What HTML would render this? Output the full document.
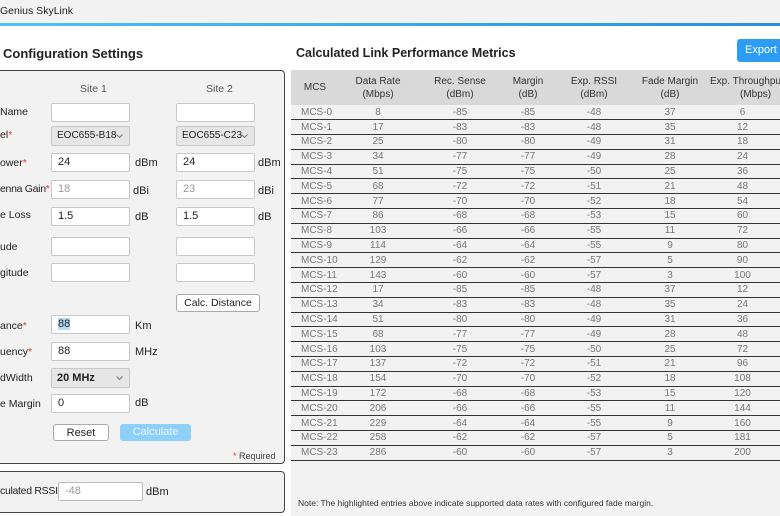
<!DOCTYPE html>
<html><head><meta charset="utf-8"><style>
*{box-sizing:border-box;margin:0;padding:0}
body{width:780px;height:516px;overflow:hidden;background:#fff;font-family:"Liberation Sans",sans-serif;font-size:11px;color:#222;position:relative}
.a{position:absolute}
.inp{position:absolute;height:19px;border:1px solid #c8c8c8;border-radius:2px;background:#fff;padding:2px 6px;font-size:11px;line-height:13px}
.sel{position:absolute;height:20px;border:1px solid #c8c8c8;border-radius:2px;background:#e6e6e6;padding:3px 5px;font-size:11px}
.sel svg{position:absolute;right:6px;top:7px}
.lbl{position:absolute;font-size:10.5px;color:#222}
.unit{position:absolute;font-size:11px}
.r{color:#e53935}
table{border-collapse:collapse;position:absolute;left:291px;top:70px;width:489px;font-size:10px;table-layout:fixed}
th{background:#d9d9d9;font-weight:normal;height:35px;color:#333;line-height:13px;white-space:nowrap}
tr.d{height:14.8px}
td{color:#777;text-align:center;border-bottom:1px solid #333;padding:0;line-height:13px}
tr td:first-child{text-align:left;padding-left:10px}
</style></head><body>
<div class="a" style="left:0;top:0;width:780px;height:23px;background:#f2f2f2"></div>
<div class="a" style="left:0;top:5px;font-size:10.5px">Genius SkyLink</div>
<div class="a" style="left:0;top:23px;width:780px;height:3px;background:linear-gradient(90deg,#4cc3f5,#2a8ee8)"></div>
<div class="a" style="left:3px;top:46px;font-size:13px;font-weight:bold">Configuration Settings</div>
<div class="a" style="left:-6px;top:70px;width:291px;height:394px;background:#f2f2f2;border:1px solid #444;border-radius:4px"></div>
<div class="lbl" style="left:80px;top:83px;color:#555">Site 1</div>
<div class="lbl" style="left:206px;top:83px;color:#555">Site 2</div>
<div class="lbl" style="left:0;top:106px">Name</div>
<div class="inp" style="left:51px;top:103px;width:79px"></div>
<div class="inp" style="left:176px;top:103px;width:79px"></div>
<div class="lbl" style="left:0;top:129px">el<span class="r">*</span></div>
<div class="sel" style="left:51px;top:126px;width:79px;font-size:10px;padding-left:5px">EOC655-B18<svg width="7" height="4" viewBox="0 0 7 4"><path d="M0.5 0.5L3.5 3.5L6.5 0.5" fill="none" stroke="#777" stroke-width="1"/></svg></div>
<div class="sel" style="left:176px;top:126px;width:79px;font-size:10px;padding-left:5px">EOC655-C23<svg width="7" height="4" viewBox="0 0 7 4"><path d="M0.5 0.5L3.5 3.5L6.5 0.5" fill="none" stroke="#777" stroke-width="1"/></svg></div>
<div class="lbl" style="left:0;top:157px">ower<span class="r">*</span></div>
<div class="inp" style="left:51px;top:153px;width:79px">24</div><div class="unit" style="left:135px;top:157px">dBm</div>
<div class="inp" style="left:176px;top:153px;width:79px">24</div><div class="unit" style="left:258px;top:157px">dBm</div>
<div class="lbl" style="left:0;top:183px;letter-spacing:-0.3px">enna Gain<span class="r">*</span></div>
<div class="inp" style="left:51px;top:180px;width:79px;color:#999">18</div><div class="unit" style="left:133px;top:185px">dBi</div>
<div class="inp" style="left:176px;top:180px;width:79px;color:#999">23</div><div class="unit" style="left:258px;top:185px">dBi</div>
<div class="lbl" style="left:0;top:209px">e Loss</div>
<div class="inp" style="left:51px;top:207px;width:79px">1.5</div><div class="unit" style="left:135px;top:211px">dB</div>
<div class="inp" style="left:176px;top:207px;width:79px">1.5</div><div class="unit" style="left:258px;top:211px">dB</div>
<div class="lbl" style="left:0;top:241px">ude</div>
<div class="inp" style="left:51px;top:237px;width:79px"></div>
<div class="inp" style="left:176px;top:237px;width:79px"></div>
<div class="lbl" style="left:0;top:267px">gitude</div>
<div class="inp" style="left:51px;top:263px;width:79px"></div>
<div class="inp" style="left:176px;top:263px;width:79px"></div>
<div class="inp" style="left:176px;top:294px;width:84px;height:18px;border-radius:3px;padding:2px 0;text-align:center;border-color:#aaa;font-size:10.5px">Calc. Distance</div>
<div class="lbl" style="left:0;top:320px">ance<span class="r">*</span></div>
<div class="inp" style="left:51px;top:315px;width:79px"><span style="background:#b8d8f8">88</span></div><div class="unit" style="left:135px;top:320px">Km</div>
<div class="lbl" style="left:0;top:346px">uency<span class="r">*</span></div>
<div class="inp" style="left:51px;top:342px;width:79px">88</div><div class="unit" style="left:135px;top:346px">MHz</div>
<div class="lbl" style="left:0;top:372px">dWidth</div>
<div class="sel" style="left:51px;top:368px;width:79px;font-weight:bold">20 MHz<svg width="7" height="4" viewBox="0 0 7 4"><path d="M0.5 0.5L3.5 3.5L6.5 0.5" fill="none" stroke="#777" stroke-width="1"/></svg></div>
<div class="lbl" style="left:0;top:398px">e Margin</div>
<div class="inp" style="left:51px;top:394px;width:79px">0</div><div class="unit" style="left:135px;top:397px">dB</div>
<div class="inp" style="left:53px;top:424px;width:56px;height:17px;border-radius:3px;padding:2px 0;text-align:center;border-color:#aaa">Reset</div>
<div class="a" style="left:120px;top:424px;width:71px;height:17px;border-radius:3px;background:#8fd0fa;color:#e8f6ff;text-align:center;line-height:16px">Calculate</div>
<div class="a" style="left:233px;top:451px;font-size:9px;color:#444"><span class="r">*</span> Required</div>
<div class="a" style="left:-6px;top:471px;width:291px;height:42px;background:#f2f2f2;border:1px solid #444;border-radius:4px"></div>
<div class="lbl" style="left:0;top:485px;letter-spacing:-0.3px">culated RSSI</div>
<div class="inp" style="left:58px;top:482px;width:85px;color:#999;border-color:#bbb">-48</div>
<div class="unit" style="left:146px;top:486px">dBm</div>
<div class="a" style="left:296px;top:46px;font-size:12.5px;font-weight:bold;color:#222">Calculated Link Performance Metrics</div>
<div class="a" style="left:737px;top:39px;width:50px;height:23px;border-radius:3px;background:#2d9cf5;color:#fff;line-height:23px;padding-left:8px;font-size:11px">Export</div>
<div class="a" style="left:291px;top:105px;width:489px;height:411px;background:#f2f2f2"></div>
<table>
<colgroup><col style="width:48px"><col style="width:78px"><col style="width:86px"><col style="width:50px"><col style="width:82px"><col style="width:70px"><col style="width:75px"></colgroup>
<tr><th>MCS</th><th>Data Rate<br>(Mbps)</th><th>Rec. Sense<br>(dBm)</th><th>Margin<br>(dB)</th><th>Exp. RSSI<br>(dBm)</th><th>Fade Margin<br>(dB)</th><th style="text-align:left;padding-left:5px">Exp. Throughput<br><span style="padding-left:30px">(Mbps)</span></th></tr>
<tr class="d"><td>MCS-0</td><td>8</td><td>-85</td><td>-85</td><td>-48</td><td>37</td><td>6</td></tr>
<tr class="d"><td>MCS-1</td><td>17</td><td>-83</td><td>-83</td><td>-48</td><td>35</td><td>12</td></tr>
<tr class="d"><td>MCS-2</td><td>25</td><td>-80</td><td>-80</td><td>-49</td><td>31</td><td>18</td></tr>
<tr class="d"><td>MCS-3</td><td>34</td><td>-77</td><td>-77</td><td>-49</td><td>28</td><td>24</td></tr>
<tr class="d"><td>MCS-4</td><td>51</td><td>-75</td><td>-75</td><td>-50</td><td>25</td><td>36</td></tr>
<tr class="d"><td>MCS-5</td><td>68</td><td>-72</td><td>-72</td><td>-51</td><td>21</td><td>48</td></tr>
<tr class="d"><td>MCS-6</td><td>77</td><td>-70</td><td>-70</td><td>-52</td><td>18</td><td>54</td></tr>
<tr class="d"><td>MCS-7</td><td>86</td><td>-68</td><td>-68</td><td>-53</td><td>15</td><td>60</td></tr>
<tr class="d"><td>MCS-8</td><td>103</td><td>-66</td><td>-66</td><td>-55</td><td>11</td><td>72</td></tr>
<tr class="d"><td>MCS-9</td><td>114</td><td>-64</td><td>-64</td><td>-55</td><td>9</td><td>80</td></tr>
<tr class="d"><td>MCS-10</td><td>129</td><td>-62</td><td>-62</td><td>-57</td><td>5</td><td>90</td></tr>
<tr class="d"><td>MCS-11</td><td>143</td><td>-60</td><td>-60</td><td>-57</td><td>3</td><td>100</td></tr>
<tr class="d"><td>MCS-12</td><td>17</td><td>-85</td><td>-85</td><td>-48</td><td>37</td><td>12</td></tr>
<tr class="d"><td>MCS-13</td><td>34</td><td>-83</td><td>-83</td><td>-48</td><td>35</td><td>24</td></tr>
<tr class="d"><td>MCS-14</td><td>51</td><td>-80</td><td>-80</td><td>-49</td><td>31</td><td>36</td></tr>
<tr class="d"><td>MCS-15</td><td>68</td><td>-77</td><td>-77</td><td>-49</td><td>28</td><td>48</td></tr>
<tr class="d"><td>MCS-16</td><td>103</td><td>-75</td><td>-75</td><td>-50</td><td>25</td><td>72</td></tr>
<tr class="d"><td>MCS-17</td><td>137</td><td>-72</td><td>-72</td><td>-51</td><td>21</td><td>96</td></tr>
<tr class="d"><td>MCS-18</td><td>154</td><td>-70</td><td>-70</td><td>-52</td><td>18</td><td>108</td></tr>
<tr class="d"><td>MCS-19</td><td>172</td><td>-68</td><td>-68</td><td>-53</td><td>15</td><td>120</td></tr>
<tr class="d"><td>MCS-20</td><td>206</td><td>-66</td><td>-66</td><td>-55</td><td>11</td><td>144</td></tr>
<tr class="d"><td>MCS-21</td><td>229</td><td>-64</td><td>-64</td><td>-55</td><td>9</td><td>160</td></tr>
<tr class="d"><td>MCS-22</td><td>258</td><td>-62</td><td>-62</td><td>-57</td><td>5</td><td>181</td></tr>
<tr class="d"><td>MCS-23</td><td>286</td><td>-60</td><td>-60</td><td>-57</td><td>3</td><td>200</td></tr>
</table>
<div class="a" style="left:298px;top:498px;font-size:8.5px;color:#333">Note: The highlighted entries above indicate supported data rates with configured fade margin.</div>
</body></html>
